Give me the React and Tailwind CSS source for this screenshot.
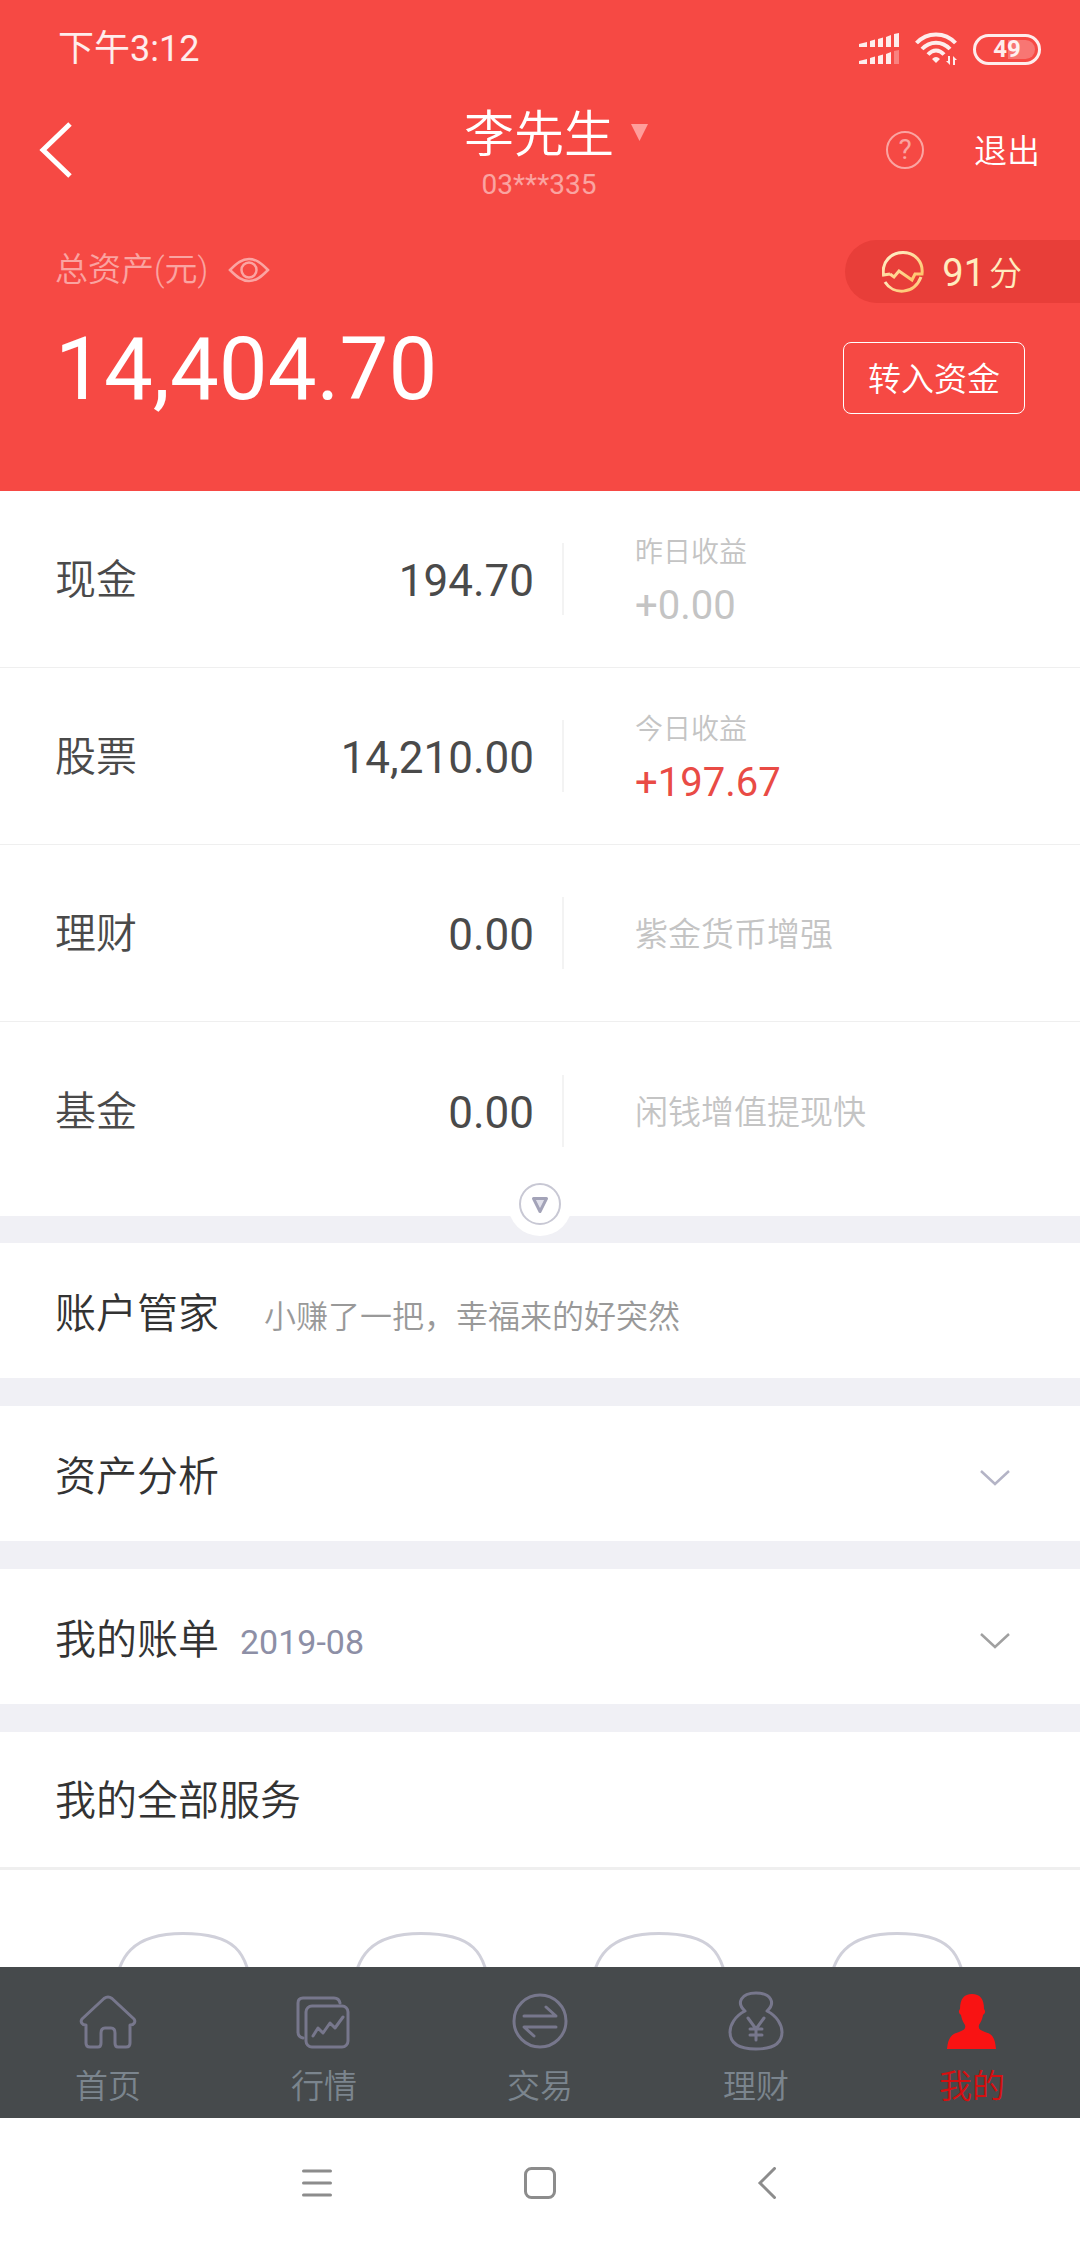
import { clsx } from "clsx";

const accounts = [
  { name: "现金", amount: "194.70", label: "昨日收益", profit: "+0.00" },
  {
    name: "股票",
    amount: "14,210.00",
    label: "今日收益",
    profit: "+197.67",
    up: true,
  },
  { name: "理财", amount: "0.00", hint: "紫金货币增强" },
  { name: "基金", amount: "0.00", hint: "闲钱增值提现快" },
];

const SignalIcon = () => (
  <svg width="40" height="32" viewBox="0 0 40 32" fill="currentColor">
    <path d="M0 11l8-2v5H0zM11 8l5-1.500v7.500h-5zM19 6l5-1.500v9.500h-5zM27 4l5-2v12h-5zM35 1l5-1v14h-5z" />
    <path d="M0 28l8-2v5H0zM11 25l5-1.500v7.500h-5zM19 23l5-1.500v9.500h-5zM27 21l5-2v12h-5z" />
    <path d="M35 18l5-1v14h-5z" opacity=".35" />
  </svg>
);

const WifiIcon = () => (
  <svg width="42" height="34" viewBox="0 0 42 34" fill="none">
    <g stroke="currentColor" strokeWidth="4">
      <path d="M1.500 11C12-.5 30-.5 40.500 11" />
      <path d="M7 17C15 8.500 27 8.500 35 17" />
      <path d="M13 22.500C18 17 24 17 29 22.500" />
    </g>
    <path
      d="M21 31l-4-4q4-4 8 0zM35 24v9l-4-4h2v-5zM38 33v-9l4 4h-2v5z"
      fill="currentColor"
    />
  </svg>
);

const EyeIcon = () => (
  <svg
    width="42"
    height="26"
    viewBox="0 0 42 26"
    fill="none"
    stroke="currentColor"
    strokeWidth="2.500"
  >
    <path d="M2 13C9 6 14 2 21 2s12 4 19 11c-7 7-12 11-19 11S9 20 2 13z" />
    <circle cx="21" cy="13" r="7.500" />
  </svg>
);

const ScoreIcon = () => (
  <svg width="42" height="42" viewBox="0 0 42 42" fill="none">
    <defs>
      <linearGradient id="gold" x1="0" y1="0" x2="1" y2="1">
        <stop offset="0" stopColor="#fff3d0" />
        <stop offset="1" stopColor="#ffbf60" />
      </linearGradient>
    </defs>
    <g stroke="url(#gold)" strokeWidth="3">
      <path d="M8 23l-6.500 1C-.5 11 9 1.500 21 1.500S41.500 11 40 23h-7l-3 6-13-9-5 6-4-3" />
      <path d="M3 31c8 13 29 13 36-5" />
    </g>
  </svg>
);

const ChevronDown = () => (
  <svg
    width="30"
    height="16"
    viewBox="0 0 30 16"
    fill="none"
    stroke="currentColor"
    strokeWidth="2.500"
  >
    <path d="M1 1l14 13L29 1" />
  </svg>
);

const HomeIcon = () => (
  <path d="M26 4.500q4-3 8 0L56 25c2 3 0 6-4 6v18q0 4-4 4h-8q-3 0-3-4V39q0-5-4-5h-6q-4 0-4 5v10q0 4-3 4h-8q-4 0-4-4V31c-4 0-6-3-4-6z" />
);

const QuoteIcon = () => (
  <>
    <path d="M9 44q-5-1-5-6V9q0-5 5-5h31q5 0 6 5" />
    <rect x="12" y="12" width="42" height="41" rx="6" />
    <path d="M19 42l5-8 5 5 7-10 5 5 8-11" />
  </>
);

const TradeIcon = () => (
  <>
    <circle cx="30" cy="27" r="26" />
    <path d="M14 22h32l-10-9M46 33H14l10 9" />
  </>
);

const MoneyIcon = () => (
  <>
    <path d="M19 17c-9-8-4-18 11-18s20 10 11 18c10 5 15 14 15 21 0 12-9 17-26 17S4 50 4 38c0-7 5-16 15-21z" />
    <path d="M22 24l8 11 8-11M30 35v11M24 35h12M24 41h12" />
  </>
);

const MineIcon = () => (
  <path
    d="M30 0c8 0 12 5 12 15 2 2 1 5-1 6-1 6-3 8-4 10-1 4 1 5 6 7 7 2 10 5 11 17H5c1-12 5-15 12-17 5-2 7-3 6-7-1-2-3-4-4-10-2-1-3-4-1-6C18 5 22 0 30 0z"
    fill="currentColor"
    stroke="none"
  />
);

const tabs = [
  { name: "首页", Icon: HomeIcon },
  { name: "行情", Icon: QuoteIcon },
  { name: "交易", Icon: TradeIcon },
  { name: "理财", Icon: MoneyIcon },
  { name: "我的", Icon: MineIcon, active: true },
];

const StatusBar = () => (
  <div className="flex h-[98px] items-center justify-between pl-[58px] pr-[39px] text-white/90">
    <span className="text-[36px]">下午3:12</span>
    <div className="flex items-center gap-4">
      <SignalIcon />
      <WifiIcon />
      <div className="relative flex h-[31px] w-[68px] items-center justify-center rounded-full border-3 border-current">
        <span className="absolute inset-y-[3px] left-[32px] right-[3px] rounded-r-full bg-white/25" />
        <span className="relative text-[24px] font-bold leading-none">49</span>
      </div>
    </div>
  </div>
);

const Header = () => (
  <header className="bg-[#f64944] pb-[67px] text-white">
    <StatusBar />
    <div className="grid grid-cols-[1fr_auto_1fr] items-center pl-[38px] pr-[40px]">
      <button aria-label="返回" className="justify-self-start">
        <svg
          width="36"
          height="56"
          viewBox="0 0 36 56"
          fill="none"
          stroke="currentColor"
          strokeWidth="5"
        >
          <path d="M32 2L5 28l27 26" />
        </svg>
      </button>
      <div className="flex flex-col items-center">
        <button className="relative pt-1 text-[50px] leading-[66px] font-[350]">
          李先生
          <svg
            className="absolute left-full top-[26px] ml-[17px]"
            width="17"
            height="17"
            viewBox="0 0 17 17"
          >
            <path d="M0 0h17L8.500 17z" fill="#ff9d9a" />
          </svg>
        </button>
        <span className="text-[28px] leading-[34px] text-white/50">
          03***335
        </span>
      </div>
      <div className="flex items-center gap-[50px] justify-self-end">
        <button
          aria-label="帮助"
          className="flex size-[38px] items-center justify-center rounded-full border-2 border-white/50 text-[28px] leading-none text-white/50"
        >
          ?
        </button>
        <button className="pt-1 text-[33px] font-[350]">退出</button>
      </div>
    </div>

    <div className="mt-[38px] flex justify-between pl-[55px]">
      <div>
        <div className="flex h-[60px] items-center gap-[20px] text-white/50">
          <span className="text-[33px] font-[350]">总资产(元)</span>
          <button aria-label="隐藏金额">
            <EyeIcon />
          </button>
        </div>
        <p className="mt-[14px] text-[87px] leading-[110px]">14,404.70</p>
      </div>
      <div className="flex flex-col items-end">
        <a
          href="#score"
          className="flex h-[63px] items-center gap-[18px] rounded-l-full bg-[#e83e39] pl-[37px] pr-[58px] text-[#ffebbe]"
        >
          <ScoreIcon />
          <span className="flex items-center gap-1 pt-1 text-[38px]">
            91<span className="text-[33px] font-[350]">分</span>
          </span>
        </a>
        <button className="mr-[55px] mt-[39px] h-[72px] rounded-lg border border-white px-[24px] pt-1 text-[33px] font-[350]">
          转入资金
        </button>
      </div>
    </div>
  </header>
);

const AccountRow = ({ account }) => (
  <li className="grid h-[177px] grid-cols-[47fr_43fr] items-center border-b border-[#efefef] last:border-b-0">
    <div className="flex h-[72px] items-center justify-between border-r-2 border-[#f3f3f3] pl-[55px] pr-[28px] pt-1 text-[#4a4a4a]">
      <span className="text-[41px] font-[350]">{account.name}</span>
      <span className="text-[44px]">{account.amount}</span>
    </div>
    <div className="pl-[71px] pt-1 text-[#c4c4c4]">
      {account.hint ? (
        <p className="text-[33px] font-[350]">{account.hint}</p>
      ) : (
        <>
          <p className="text-[28px] leading-[50px] font-[350]">
            {account.label}
          </p>
          <p
            className={clsx(
              "text-[40px] leading-[56px]",
              account.up && "text-[#e94b45]"
            )}
          >
            {account.profit}
          </p>
        </>
      )}
    </div>
  </li>
);

const Section = ({ title, note, action }) => (
  <section className="flex h-[135px] items-center justify-between bg-white pl-[55px] pr-[70px] pt-2">
    <div className="flex items-baseline">
      <h2 className="text-[41px] font-[350] text-[#333333]">{title}</h2>
      {note}
    </div>
    {action}
  </section>
);

const Services = () => (
  <div className="bg-white">
    <h2 className="flex h-[138px] items-center border-b-3 border-[#efefef] pl-[55px] pt-1 text-[41px] font-[350] text-[#333333]">
      我的全部服务
    </h2>
    <div className="grid grid-cols-4 justify-items-center px-[64px] pt-[62px]">
      {["一", "二", "三", "四"].map((n) => (
        <a key={n} href="#service" aria-label={`服务${n}`}>
          <svg
            width="140"
            height="140"
            viewBox="0 0 140 140"
            fill="none"
            stroke="#d0d0da"
            strokeWidth="3"
          >
            <path d="M70 1.500C118 1.500 138.500 16 138.500 70S118 138.500 70 138.500 1.500 118 1.500 70 22 1.500 70 1.500z" />
          </svg>
        </a>
      ))}
    </div>
  </div>
);

const TabBar = () => (
  <nav className="grid h-[151px] shrink-0 grid-cols-5 bg-[#464a4c]">
    {tabs.map(({ name, Icon, active }) => (
      <a
        key={name}
        href="#tab"
        className={clsx(
          "flex flex-col items-center pt-[27px] text-[33px] leading-[48px] font-[350]",
          active ? "text-[#d60f10]" : "text-[#7b858e]"
        )}
      >
        <svg
          className={clsx(
            "mb-[13px] overflow-visible",
            active ? "text-[#f91313]" : "text-[#77778c]"
          )}
          width="60"
          height="56"
          viewBox="0 0 60 56"
          fill="none"
          stroke="currentColor"
          strokeWidth="3"
          strokeLinecap="round"
          strokeLinejoin="round"
        >
          <Icon />
        </svg>
        {name}
      </a>
    ))}
  </nav>
);

const SystemBar = () => (
  <div className="flex h-[130px] shrink-0 items-center justify-center gap-[190px] bg-white text-[#8c8c8c]">
    <button aria-label="菜单">
      <svg
        width="32"
        height="32"
        viewBox="0 0 32 32"
        stroke="currentColor"
        strokeWidth="3"
        strokeLinecap="round"
      >
        <path d="M1.500 4h27M1.500 16h27M1.500 28h27" />
      </svg>
    </button>
    <button aria-label="主屏幕">
      <svg
        width="32"
        height="32"
        viewBox="0 0 32 32"
        fill="none"
        stroke="currentColor"
        strokeWidth="3"
      >
        <rect x="1.500" y="1.500" width="29" height="29" rx="6" />
      </svg>
    </button>
    <button aria-label="后退">
      <svg
        width="32"
        height="32"
        viewBox="0 0 32 32"
        fill="none"
        stroke="currentColor"
        strokeWidth="3"
        strokeLinecap="round"
      >
        <path d="M28.500 1.500L14 16l14.500 14.500" />
      </svg>
    </button>
  </div>
);

const App = () => {
  return (
    <div className="flex h-screen flex-col bg-[#f0f0f5] font-[Roboto,'Noto_Sans_CJK_SC',sans-serif]">
      <main className="min-h-0 flex-1 overflow-y-auto [scrollbar-width:none]">
        <Header />
        <div className="relative bg-white pb-[17px]">
          <ul>
            {accounts.map((account) => (
              <AccountRow key={account.name} account={account} />
            ))}
          </ul>
          <button
            aria-label="展开"
            className="absolute -bottom-[20px] left-1/2 flex size-[64px] -translate-x-1/2 items-center justify-center rounded-full bg-white"
          >
            <svg width="42" height="42" viewBox="0 0 42 42" fill="none">
              <circle cx="21" cy="21" r="20" stroke="#c8c8d4" strokeWidth="2" />
              <path
                d="M14.500 15.500h13L21 28.500z"
                fill="#e0e0ea"
                stroke="#a3a3b8"
                strokeWidth="3"
                strokeLinejoin="round"
              />
            </svg>
          </button>
        </div>
        <div className="mt-[27px] flex flex-col gap-[28px]">
          <Section
            title="账户管家"
            note={
              <p className="ml-[45px] text-[32px] font-[350] text-[#999999]">
                小赚了一把，幸福来的好突然
              </p>
            }
          />
          <Section
            title="资产分析"
            action={
              <button aria-label="展开资产分析" className="text-[#b4b4c6]">
                <ChevronDown />
              </button>
            }
          />
          <Section
            title="我的账单"
            note={
              <span className="ml-[21px] text-[34px] text-[#8d8fa6]">
                2019-08
              </span>
            }
            action={
              <button aria-label="展开我的账单" className="text-[#a0a0a0]">
                <ChevronDown />
              </button>
            }
          />
          <Services />
        </div>
      </main>
      <TabBar />
      <SystemBar />
    </div>
  );
};

export default App;
